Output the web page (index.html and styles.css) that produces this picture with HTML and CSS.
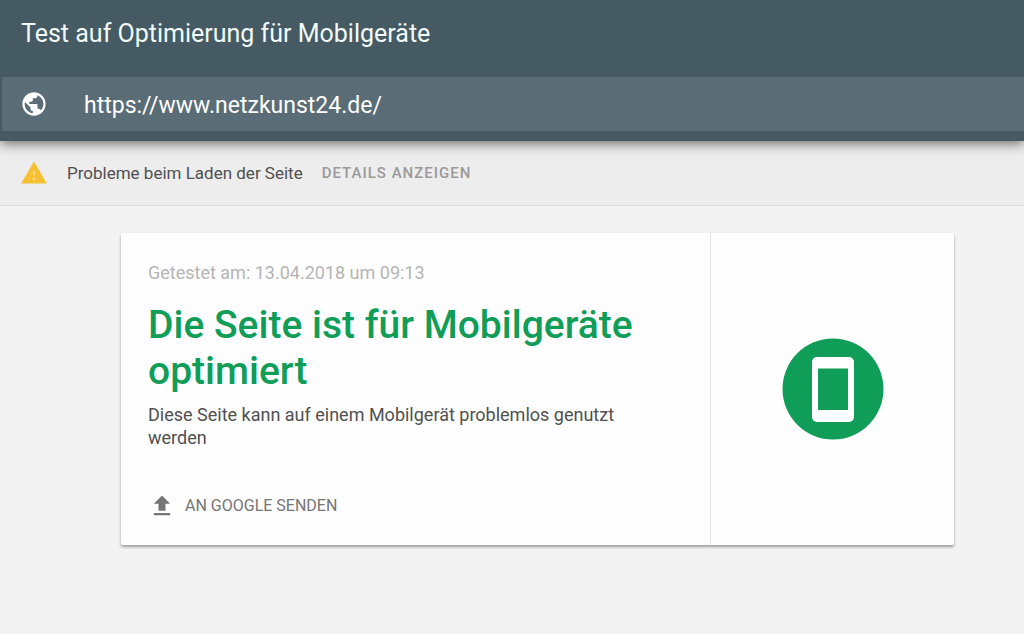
FILE: index.html
```html
<!DOCTYPE html>
<html lang="de">
<head>
  <meta charset="UTF-8">
  <meta name="viewport" content="width=device-width, initial-scale=1.0">
  <title>Test auf Optimierung für Mobilgeräte</title>
  <link rel="stylesheet" href="styles.css">
</head>
<body>
  <header class="header">
    <h1 class="header-title">Test auf Optimierung für Mobilgeräte</h1>
    <form class="url-bar">
      <label class="url-label" for="url" aria-label="URL">
        <svg class="icon" viewBox="0 0 24 24" fill="currentColor">
          <path d="M12 2C6.48 2 2 6.48 2 12s4.48 10 10 10 10-4.48 10-10S17.52 2 12 2zm-1 17.93c-3.95-.49-7-3.85-7-7.93 0-.62.08-1.21.21-1.79L9 15v1c0 1.1.9 2 2 2v1.93zm6.9-2.54c-.26-.81-1-1.39-1.9-1.39h-1v-3c0-.55-.45-1-1-1H8v-2h2c.55 0 1-.45 1-1V7h2c1.1 0 2-.9 2-2v-.41c2.93 1.19 5 4.06 5 7.41 0 2.08-.8 3.97-2.1 5.39z"></path>
        </svg>
      </label>
      <input class="url-input" id="url" type="text" value="https://www.netzkunst24.de/" spellcheck="false">
    </form>
  </header>

  <!-- Loading issues -->
  <div class="notice">
    <svg class="icon" viewBox="0 0 24 24">
      <path fill="#f7c034" d="M1 21h22L12 2z"></path>
      <path fill="#fad77e" d="M13 18h-2v-2h2zm0-4h-2v-4h2z"></path>
    </svg>
    <span class="notice-text">Probleme beim Laden der Seite</span>
    <button class="button notice-button" type="button">Details anzeigen</button>
  </div>

  <main class="main">
    <section class="card">
      <div class="card-body">
        <p class="tested">Getestet am: 13.04.2018 um 09:13</p>
        <h2 class="result">Die Seite ist für Mobilgeräte optimiert</h2>
        <p class="description">Diese Seite kann auf einem Mobilgerät problemlos genutzt werden</p>
        <button class="button send-button" type="button">
          <svg class="icon" viewBox="0 0 24 24" fill="currentColor">
            <path d="M9 16h6v-6h4l-7-7-7 7h4zm-4 2h14v2H5z"></path>
          </svg>
          An Google senden
        </button>
      </div>
      <div class="card-side">
        <!-- Phone badge -->
        <svg class="badge" viewBox="0 0 102 102">
          <circle cx="51" cy="51" r="50.5" fill="#109d58"></circle>
          <rect x="30" y="19" width="42" height="65" rx="5" fill="#fff"></rect>
          <rect x="36" y="30.5" width="30" height="41.5" fill="#109d58"></rect>
        </svg>
      </div>
    </section>
  </main>
</body>
</html>
```
FILE: styles.css
```css
* {
  box-sizing: border-box;
}

body {
  margin: 0;
  min-height: 100vh;
  font-family: Roboto, "Liberation Sans", sans-serif;
  background-color: #f3f3f3;
  color: #505050;
}

h1, h2, p {
  margin: 0;
}

.icon {
  display: block;
  flex: none;
  width: 28px;
  height: 28px;
}

.button {
  border: 0;
  padding: 0;
  background: none;
  font-family: inherit;
  font-size: 16px;
  line-height: 24px;
  text-transform: uppercase;
  cursor: pointer;
}

/* Header */
.header {
  position: relative;
  padding: 18px 0 10px 2px;
  background-color: #455a63;
  box-shadow: 0 2px 12px rgba(0, 0, 0, 0.6);
}

.header-title {
  padding: 0 19px 27px;
  font-size: 25px;
  font-weight: 400;
  line-height: 32px;
  color: #f2fafa;
}

.url-bar {
  display: flex;
  align-items: center;
  gap: 36px;
  height: 54px;
  padding: 0 18px;
  background-color: #5a6d76;
  color: #fff;
}

.url-input {
  flex: 1;
  min-width: 0;
  border: 0;
  outline: 0;
  padding: 3px 0 0;
  background: none;
  font-family: inherit;
  font-size: 23px;
  line-height: 32px;
  color: #fff;
}

/* Notice */
.notice {
  display: flex;
  align-items: center;
  gap: 19px;
  height: 65px;
  padding: 0 19px 0 20px;
  background-color: #ededed;
  border-bottom: 1px solid #d9d9d9;
}

.notice-text {
  font-size: 17px;
  line-height: 24px;
}

.notice-button {
  font-size: 15px;
  font-weight: 500;
  letter-spacing: 1px;
  color: #9a9a9a;
}

/* Result card */
.main {
  padding: 27px 70px 27px 121px;
}

.card {
  display: flex;
  background-color: #fefefe;
  border-radius: 2px;
  box-shadow: 0 2px 3px rgba(0, 0, 0, 0.36);
}

.card-body {
  flex: 1;
  padding: 28px 60px 25px 27px;
}

.tested {
  font-size: 18px;
  line-height: 24px;
  color: #b5b5b5;
}

.result {
  margin-top: 17px;
  font-size: 39px;
  font-weight: 500;
  line-height: 46px;
  color: #109d58;
}

.description {
  margin-top: 9px;
  font-size: 18px;
  line-height: 23px;
}

.send-button {
  display: flex;
  align-items: center;
  gap: 9px;
  margin-top: 43px;
  color: #757575;
}

.card-side {
  display: flex;
  align-items: center;
  justify-content: center;
  width: 244px;
  border-left: 1px solid #e2e2e2;
}

.badge {
  width: 102px;
  height: 102px;
}
```
